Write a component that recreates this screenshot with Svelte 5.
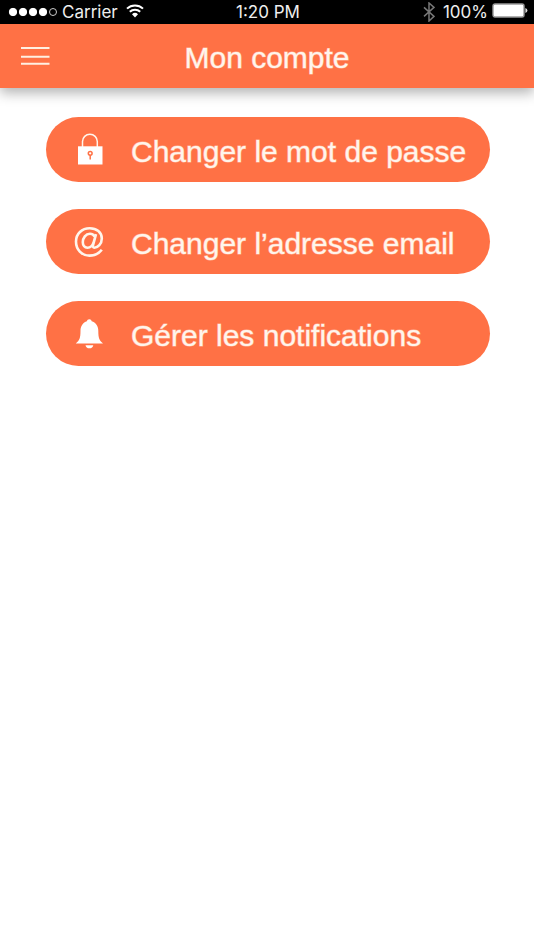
<script>
  const dots = [true, true, true, true, false]

  const actions = [
    { icon: 'lock', label: 'Changer le mot de passe' },
    { icon: 'at', label: 'Changer l’adresse email' },
    { icon: 'bell', label: 'Gérer les notifications' },
  ]
</script>

<div class="screen">
  <div class="status">
    <div class="side">
      <svg class="dots" width="50" height="10" viewBox="0 0 50 10" aria-hidden="true">
        {#each dots as full, i}
          <circle cx={5 + i * 10} cy="5" r={full ? 3.7 : 3.5} class:full />
        {/each}
      </svg>
      <span>Carrier</span>
      <svg class="wifi" width="18" height="16" viewBox="0 0 18 16" aria-hidden="true">
        <path d="M1 4.6a11.6 11.6 0 0 1 16 0M3.800 7.800a7.500 7.500 0 0 1 10.400 0" />
        <path class="core" d="M6 10.200a4.500 4.500 0 0 1 6 0L9 13.400z" />
      </svg>
    </div>
    <span class="time">1:20 PM</span>
    <div class="side right">
      <svg class="bluetooth" width="12" height="20" viewBox="0 0 12 20" aria-hidden="true">
        <path d="M1 5.4l10 9-5 4.6V1l5 4.4-10 9" />
      </svg>
      <span class="percent">100%</span>
      <svg width="36" height="18" viewBox="0 0 36 18" aria-hidden="true">
        <rect x="1" y="1" width="31" height="13" rx="2" fill="#fff" stroke="#999" stroke-width="1.4" />
        <path d="M33.4 5q2 .6 2 2.5t-2 2.5z" fill="#ddd" />
      </svg>
    </div>
  </div>

  <header>
    <button class="menu" aria-label="Menu">
      <svg width="30" height="20" viewBox="0 0 30 20" aria-hidden="true">
        <path d="M1 2h28.500M1 10.700h28.500M1 17.800h28.500" />
      </svg>
    </button>
    <h1>Mon compte</h1>
  </header>

  <main>
    {#each actions as action}
      <button class="action">
        <svg class="icon" width="32" height="34" viewBox="0 0 32 34" aria-hidden="true">
          {#if action.icon === 'lock'}
            <path class="line thin" d="M9.500 14V8.600a7.400 7.400 0 0 1 14.800 0V14" />
            <path d="M5 13.300h24.500v18.200H5z" />
            <circle class="hole" cx="17.200" cy="20.300" r="1.900" />
            <path class="hole" d="M17.200 22.200v4.200" />
          {:else if action.icon === 'at'}
            <path class="line" d="M21.500 11.500C20.500 9.600 18.900 8.700 17 8.700c-4.200 0-7.200 4.200-7.200 8.600 0 3.300 1.900 5.400 4.600 5.400 3 0 5.400-2.400 6.500-6.200L23 9.200l-2.900 10.700c-.5 1.800 0 2.800 1.300 2.800 3.300 0 7.400-3.600 7.400-9.200 0-6-5.100-10.300-12.100-10.300C8.900 3.200 3 8.900 3 16.500 3 24.500 8.700 30.600 16.400 30.600c5.200 0 9.600-2.100 12.400-5.900" />
          {:else}
            <path d="M16.300 2.300c1.300 0 2.200.8 2.400 2 4 1.200 6.600 4.700 6.600 9.500 0 7.500 1 9.700 4.700 12.700H2.800c3.700-3 4.700-5.200 4.700-12.700 0-4.800 2.600-8.300 6.400-9.500.2-1.200 1.100-2 2.400-2z" />
            <path d="M12.500 28.200h7.800c-.3 2-1.800 3.100-3.900 3.100s-3.600-1.100-3.900-3.100z" />
          {/if}
        </svg>
        <span>{action.label}</span>
      </button>
    {/each}
  </main>
</div>

<style>
  :global(body) {
    margin: 0;
    background: #fff;
  }

  .screen {
    font-family: "Liberation Sans", Arial, sans-serif;
    color: #fff5ec;
  }

  .status {
    display: grid;
    grid-template-columns: 1fr auto 1fr;
    align-items: center;
    height: 24px;
    padding: 0 6px 0 8px;
    background: #000;
    color: #eee;
    font-family: Inter, sans-serif;
    font-size: 17px;
    line-height: 24px;
  }

  .side {
    display: flex;
    align-items: center;
    gap: 4px;
  }

  .right {
    justify-content: flex-end;
  }

  .dots circle {
    fill: none;
    stroke: #ccc;
    stroke-width: 1;
  }

  .dots circle.full {
    fill: #fff;
    stroke: #fff;
  }

  .wifi {
    margin-left: 4px;
  }

  .wifi path {
    fill: none;
    stroke: #fff;
    stroke-width: 2;
  }

  .wifi .core {
    fill: #fff;
    stroke: none;
  }

  .bluetooth {
    fill: none;
    stroke: #777;
    stroke-width: 1.5;
    margin-right: 4px;
  }

  header {
    display: grid;
    grid-template-columns: 1fr auto 1fr;
    align-items: center;
    height: 64px;
    padding: 0 20px;
    background: #ff7145;
    box-shadow: 0 5px 12px rgba(0, 0, 0, 0.3);
  }

  button {
    border: 0;
    color: inherit;
    font: inherit;
    cursor: pointer;
  }

  .menu {
    display: flex;
    justify-self: start;
    padding: 0;
    background: none;
  }

  .menu path {
    stroke: #fff0e2;
    stroke-width: 2;
  }

  h1 {
    margin: 0;
    padding-top: 4px;
    font-size: 30px;
    font-weight: 400;
    line-height: 36px;
    -webkit-text-stroke: 1px rgba(255, 245, 236, 0.5);
  }

  main {
    display: flex;
    flex-direction: column;
    gap: 27px;
    padding: 29px 44px 29px 46px;
  }

  .action {
    display: flex;
    align-items: center;
    gap: 26px;
    height: 65px;
    padding: 0 27px;
    border-radius: 33px;
    background: #ff7145;
    font-size: 30px;
    line-height: 36px;
    text-align: left;
    white-space: nowrap;
  }

  .action span {
    padding-top: 4px;
    -webkit-text-stroke: 1px rgba(255, 245, 236, 0.5);
  }

  .icon {
    flex: none;
    fill: #fff;
  }

  .line {
    fill: none;
    stroke: #fff5ec;
    stroke-width: 2.6;
  }

  .thin {
    stroke-width: 1.5;
  }

  .hole {
    fill: none;
    stroke: #ff7145;
    stroke-width: 1.5;
  }
</style>
